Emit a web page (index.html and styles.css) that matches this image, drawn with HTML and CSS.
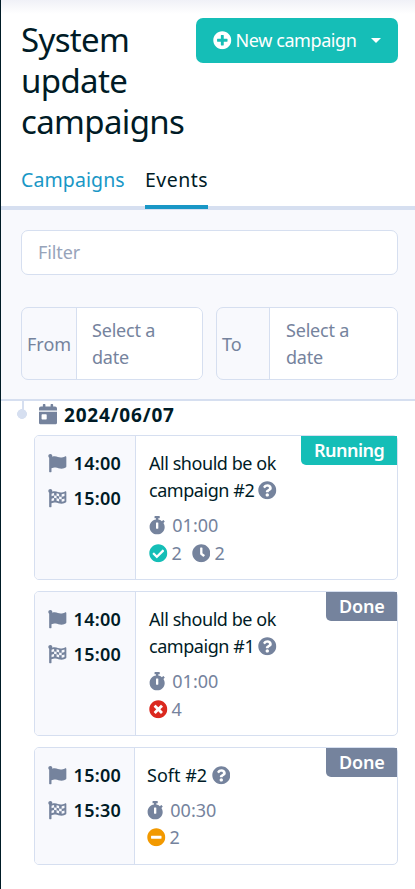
FILE: index.html
```html
<!DOCTYPE html>
<html lang="en">
<head>
<meta charset="utf-8">
<title>System update campaigns</title>
<link rel="stylesheet" href="styles.css">
</head>
<body>
<svg class="defs" aria-hidden="true">
<symbol id="plus" viewBox="0 0 512 512"><path d="M256 8C119 8 8 119 8 256s111 248 248 248 248-111 248-248S393 8 256 8zm144 276c0 6.6-5.4 12-12 12h-92v92c0 6.6-5.4 12-12 12h-56c-6.6 0-12-5.4-12-12v-92h-92c-6.6 0-12-5.4-12-12v-56c0-6.6 5.4-12 12-12h92v-92c0-6.6 5.4-12 12-12h56c6.6 0 12 5.4 12 12v92h92c6.6 0 12 5.4 12 12v56z"/></symbol>
<symbol id="check" viewBox="0 0 512 512"><path d="M504 256c0 136.967-111.033 248-248 248S8 392.967 8 256 119.033 8 256 8s248 111.033 248 248zM227.314 387.314l184-184c6.248-6.248 6.248-16.379 0-22.627l-22.627-22.627c-6.248-6.249-16.379-6.249-22.628 0L216 308.118l-70.059-70.059c-6.248-6.248-16.379-6.248-22.628 0l-22.627 22.627c-6.248 6.248-6.248 16.379 0 22.627l104 104c6.249 6.249 16.379 6.249 22.628.001z"/></symbol>
<symbol id="clock" viewBox="0 0 512 512"><path d="M256,8C119,8,8,119,8,256S119,504,256,504,504,393,504,256,393,8,256,8Zm92.49,313h0l-20,25a16,16,0,0,1-22.49,2.5h0l-67-49.72a40,40,0,0,1-15-31.23V112a16,16,0,0,1,16-16h32a16,16,0,0,1,16,16V256l58,42.5A16,16,0,0,1,348.49,321Z"/></symbol>
<symbol id="times" viewBox="0 0 512 512"><path d="M256 8C119 8 8 119 8 256s111 248 248 248 248-111 248-248S393 8 256 8zm121.6 313.1c4.7 4.7 4.7 12.3 0 17L338 377.6c-4.7 4.7-12.3 4.7-17 0L256 312l-65.1 65.6c-4.7 4.7-12.3 4.7-17 0L134.4 338c-4.7-4.7-4.7-12.3 0-17l65.6-65-65.6-65.1c-4.7-4.7-4.7-12.3 0-17l39.6-39.6c4.7-4.7 12.3-4.7 17 0l65 65.7 65.1-65.6c4.7-4.7 12.3-4.7 17 0l39.6 39.6c4.7 4.7 4.7 12.3 0 17L312 256l65.6 65.1z"/></symbol>
<symbol id="minus" viewBox="0 0 512 512"><path d="M256 8C119 8 8 119 8 256s111 248 248 248 248-111 248-248S393 8 256 8zM124 296c-6.6 0-12-5.4-12-12v-56c0-6.6 5.4-12 12-12h264c6.6 0 12 5.4 12 12v56c0 6.6-5.4 12-12 12H124z"/></symbol>
<symbol id="help" viewBox="0 0 512 512"><path d="M504 256c0 136.997-111.043 248-248 248S8 392.997 8 256C8 119.083 119.043 8 256 8s248 111.083 248 248zM262.655 90c-54.497 0-89.255 22.957-116.549 63.758-3.536 5.286-2.353 12.415 2.715 16.258l34.699 26.31c5.205 3.947 12.621 3.008 16.665-2.122 17.864-22.658 30.113-35.797 57.303-35.797 20.429 0 45.698 13.148 45.698 32.958 0 14.976-12.363 22.667-32.534 33.976C247.128 238.528 216 254.941 216 296v4c0 6.627 5.373 12 12 12h56c6.627 0 12-5.373 12-12v-1.333c0-28.462 83.186-29.647 83.186-106.667 0-58.002-60.165-102-116.531-102zM256 338c-25.365 0-46 20.635-46 46 0 25.364 20.635 46 46 46s46-20.636 46-46c0-25.365-20.635-46-46-46z"/></symbol>
<symbol id="stopwatch" viewBox="0 0 448 512"><path d="M432 304c0 114.9-93.1 208-208 208S16 418.9 16 304c0-104 76.3-190.2 176-205.5V64h-28c-6.6 0-12-5.4-12-12V12c0-6.6 5.4-12 12-12h120c6.6 0 12 5.4 12 12v40c0 6.6-5.4 12-12 12h-28v34.5c37.5 5.8 71.7 21.6 99.7 44.6l27.5-27.5c4.7-4.7 12.3-4.7 17 0l28.3 28.3c4.7 4.7 4.7 12.3 0 17l-29.4 29.4-.6.6C419.7 223.3 432 262.2 432 304zm-176 36V188.5c0-6.6-5.4-12-12-12h-40c-6.6 0-12 5.4-12 12V340c0 6.6 5.4 12 12 12h40c6.6 0 12-5.4 12-12z"/></symbol>
<symbol id="flag" viewBox="0 0 512 512"><path d="M349.565 98.783C295.978 98.783 251.721 64 184.348 64c-24.955 0-47.309 4.384-68.045 12.013a55.947 55.947 0 0 0 3.586-23.562C118.117 24.015 94.806 1.206 66.338.048 34.345-1.254 8 24.296 8 56c0 19.026 9.497 35.825 24 45.945V488c0 13.255 10.745 24 24 24h16c13.255 0 24-10.745 24-24v-94.4c28.311-12.064 63.582-22.122 114.435-22.122 53.588 0 97.844 34.783 165.217 34.783 48.169 0 86.667-16.294 122.505-40.858C506.84 359.452 512 349.571 512 339.045v-243.1c0-23.393-24.269-38.87-45.485-29.016-34.338 15.948-76.454 31.854-116.95 31.854z"/></symbol>
<symbol id="checkered" viewBox="0 0 512 512"><use href="#flag"/><path class="squares" d="M98 130q35-16 70-18v68q-35 2-70 18zM236 120q35 9 70 20v68q-35-11-70-20zM376 147q35-4 78-22v68q-40 18-78 22zM168 180q35-2 68 8v68q-34-10-68-8zM306 208q35 8 70 7v68q-35 1-70-7zM98 266q35-16 70-18v68q-35 2-70 18zM236 256q35 9 70 20v68q-35-11-70-20zM376 283q35-4 78-22v68q-40 18-78 22z"/></symbol>
<symbol id="calendar" viewBox="0 0 448 512"><path d="M0 464c0 26.5 21.5 48 48 48h352c26.5 0 48-21.5 48-48V192H0v272zm64-192c0-8.8 7.2-16 16-16h96c8.8 0 16 7.2 16 16v96c0 8.8-7.2 16-16 16H80c-8.8 0-16-7.2-16-16v-96zM400 64h-48V16c0-8.8-7.2-16-16-16h-32c-8.8 0-16 7.2-16 16v48H160V16c0-8.8-7.2-16-16-16h-32c-8.8 0-16 7.2-16 16v48H48C21.5 64 0 85.5 0 112v48h448v-48c0-26.5-21.5-48-48-48z"/></symbol>
</svg>
<div class="page">
<header class="head">
<h1>System<br>update<br>campaigns</h1>
<button class="new"><svg class="icon"><use href="#plus"/></svg><span>New campaign</span><i class="caret"></i></button>
</header>
<nav class="tabs"><a class="tab link">Campaigns</a><a class="tab active">Events</a></nav>
<section class="filters">
<div class="filter">Filter</div>
<div class="dates">
<div class="date"><span class="label from">From</span><span class="value">Select a date</span></div>
<div class="date"><span class="label to">To</span><span class="value">Select a date</span></div>
</div>
</section>
<main class="timeline">
<div class="day"><span class="rail"></span><svg class="icon cal"><use href="#calendar"/></svg><h2>2024/06/07</h2></div>
<article class="card">
<div class="times"><div><svg class="icon"><use href="#flag"/></svg><b>14:00</b></div><div><svg class="icon"><use href="#checkered"/></svg><b>15:00</b></div></div>
<div class="info"><div class="name">All should be ok<br>campaign #2 <svg class="icon help"><use href="#help"/></svg></div>
<div class="duration"><svg class="icon watch"><use href="#stopwatch"/></svg><span>01:00</span></div>
<div class="counts"><svg class="icon ok"><use href="#check"/></svg><span>2</span><svg class="icon wait"><use href="#clock"/></svg><span>2</span></div></div>
<span class="badge running">Running</span>
</article>
<article class="card">
<div class="times"><div><svg class="icon"><use href="#flag"/></svg><b>14:00</b></div><div><svg class="icon"><use href="#checkered"/></svg><b>15:00</b></div></div>
<div class="info"><div class="name">All should be ok<br>campaign #1 <svg class="icon help"><use href="#help"/></svg></div>
<div class="duration"><svg class="icon watch"><use href="#stopwatch"/></svg><span>01:00</span></div>
<div class="counts"><svg class="icon bad"><use href="#times"/></svg><span>4</span></div></div>
<span class="badge">Done</span>
</article>
<article class="card short">
<div class="times"><div><svg class="icon"><use href="#flag"/></svg><b>15:00</b></div><div><svg class="icon"><use href="#checkered"/></svg><b>15:30</b></div></div>
<div class="info"><div class="name">Soft #2 <svg class="icon help"><use href="#help"/></svg></div>
<div class="duration"><svg class="icon watch"><use href="#stopwatch"/></svg><span>00:30</span></div>
<div class="counts"><svg class="icon warn"><use href="#minus"/></svg><span>2</span></div></div>
<span class="badge">Done</span>
</article>
</main>
</div>
</body>
</html>
```
FILE: styles.css
```css
* { box-sizing: border-box; }
body { margin: 0; font: 400 18px/27px "Noto Sans", sans-serif; color: #001b26; background: #fff; overflow: hidden; }
.defs { position: absolute; width: 0; height: 0; }
.page { height: 889px; border-left: 1px solid #001b26; background: linear-gradient(#f0f1f7, #fff 14px); }
.icon { width: 18.6px; height: 18.6px; fill: currentColor; flex: none; }
.head { display: flex; justify-content: space-between; align-items: flex-start; height: 153px; padding: 18px 17px 0 20px; }
h1 { margin: 1px 0 0; font-size: 33px; line-height: 41px; font-weight: 400; letter-spacing: -0.65px; }
.new { display: flex; align-items: center; width: 202px; height: 45px; padding: 0 17px; border: 0; border-radius: 7px; background: #15beb7; color: #fff; font: inherit; letter-spacing: -0.42px; }
.new span { margin-left: 4px; white-space: nowrap; }
.caret { margin-left: auto; border: 5px solid transparent; border-top-color: #fff; border-bottom: 0; }
.tabs { display: flex; gap: 20px; height: 57px; padding-left: 20px; border-bottom: 4px solid #d6dff0; }
.tab { height: 56px; padding-top: 13px; font-size: 19.5px; letter-spacing: 0.1px; }
.link { width: 104px; color: #1997c6; }
.active { width: 63px; border-bottom: 4px solid #1997c6; letter-spacing: 0.5px; }
.filters { height: 191px; padding: 20px 17px 0 20px; background: #f8f9fd; border-bottom: 2px solid #d6dff0; }
.filter { height: 45px; padding: 8px 16px; background: #fff; border: 1px solid #d6dff0; border-radius: 7px; color: #97a4ba; letter-spacing: -0.1px; }
.dates { display: flex; gap: 13px; margin-top: 32px; }
.date { display: flex; width: 182px; height: 73px; border: 1px solid #d6dff0; border-radius: 7px; overflow: hidden; color: #75839d; }
.label { display: flex; align-items: center; padding: 2px 0 0 5px; border-right: 1px solid #d6dff0; flex: none; }
.from { width: 55px; }
.to { width: 53px; }
.value { flex: 1; padding: 9px 40px 0 15px; background: #fff; letter-spacing: -0.2px; }
.to + .value { padding-left: 16px; }
.timeline { padding: 0 17px 0 14px; }
.day { display: flex; align-items: flex-start; height: 34px; }
.rail { width: 15px; height: 18px; background: linear-gradient(#d6dff0, #d6dff0) 7px 0 / 2px 12px no-repeat, radial-gradient(circle at 7px 13px, #d6dff0 4.6px, transparent 5.2px); }
.cal { width: 18px; height: 20.6px; margin: 3px 0 0 9px; color: #75839d; }
h2 { margin: 1px 0 0 7px; font-size: 19px; line-height: 27px; font-weight: 700; letter-spacing: 0.8px; }
.card { position: relative; display: flex; height: 145px; margin: 0 0 11px 19px; border: 1px solid #d6dff0; border-radius: 5px; }
.card.short { height: 118px; }
.times { width: 101px; padding: 14px 0 0 13px; background: #f8f9fd; border-right: 1px solid #d6dff0; border-radius: 4px 0 0 4px; color: #75839d; flex: none; }
.short .times { width: 100px; }
.times div { display: flex; align-items: center; height: 27px; margin-bottom: 8px; }
.times b { margin-left: 7px; color: #001b26; font-weight: 600; letter-spacing: 0.25px; }
.squares { fill: #f8f9fd; }
.info { padding: 14px 0 0 13px; color: #75839d; }
.short .info { padding-left: 12px; }
.name { color: #001b26; letter-spacing: -0.45px; }
.short .name { letter-spacing: 0; }
.help { color: #75839d; vertical-align: -3px; }
.duration { display: flex; align-items: center; height: 27px; margin-top: 8px; }
.watch { width: 16.3px; margin-right: 7px; }
.counts { display: flex; align-items: center; height: 27px; }
.card:not(.short) .counts { height: 28px; padding-top: 1px; }
.counts span { margin-left: 4px; }
.ok { color: #15beb7; }
.bad { color: #db291f; }
.warn { color: #f29900; }
.counts .wait { margin-left: 10px; }
.badge { position: absolute; top: 0; right: 0; width: 71px; height: 29px; padding: 1px 0 0 13px; border-radius: 0 0 0 5px; background: #75839d; color: #fff; font-weight: 600; letter-spacing: -0.2px; }
.running { width: 96px; background: #15beb7; letter-spacing: -0.5px; }
```
